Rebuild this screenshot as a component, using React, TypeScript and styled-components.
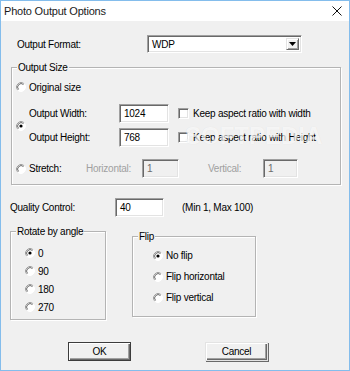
import styled, { createGlobalStyle } from 'styled-components'

const GlobalStyle = createGlobalStyle`
  body {
    margin: 0;
    background: #ffffff;
    font-family: 'Liberation Sans', Arial, sans-serif;
  }
`

const Window = styled.div`
  position: relative;
  width: 350px;
  height: 371px;
  box-sizing: border-box;
  border: 1px solid #84bdec;
  background: #f0f0f0;
  font-size: 10px;
  letter-spacing: -0.25px;
  color: #000;
  display: flex;
  flex-direction: column;
  overflow: hidden;
`
const TitleBar = styled.div`
  height: 20px;
  flex-shrink: 0;
  background: #fff;
  display: flex;
  align-items: center;
  justify-content: space-between;
  padding: 0 7px 0 3px;
  font-size: 11px;
  letter-spacing: -0.2px;
  color: #1a1a1a;
`
const Row = styled.div<{ $top?: number; $left?: number; $h?: number }>`
  display: flex;
  align-items: center;
  margin-top: ${(p) => p.$top ?? 0}px;
  padding-left: ${(p) => p.$left ?? 0}px;
  height: ${(p) => (p.$h ? `${p.$h}px` : 'auto')};
`
const Label = styled.span<{ $w?: number; $ml?: number; $disabled?: boolean }>`
  display: inline-block;
  width: ${(p) => (p.$w ? `${p.$w}px` : 'auto')};
  margin-left: ${(p) => p.$ml ?? 0}px;
  color: ${(p) => (p.$disabled ? '#a0a0a0' : '#000')};
  white-space: nowrap;
  flex-shrink: 0;
`
const Input = styled.div<{ $w: number; $h?: number; $disabled?: boolean }>`
  width: ${(p) => p.$w}px;
  height: ${(p) => p.$h ?? 19}px;
  box-sizing: border-box;
  flex-shrink: 0;
  background: ${(p) => (p.$disabled ? '#f0f0f0' : '#fff')};
  color: ${(p) => (p.$disabled ? '#6d6d6d' : '#000')};
  border-style: solid;
  border-width: 1px;
  border-color: #a0a0a0 #fff #fff #a0a0a0;
  box-shadow: inset 1px 1px 0 #696969, inset -1px -1px 0 #e3e3e3;
  padding: 3px 0 0 4px;
  line-height: 12px;
`
const Select = styled.div`
  position: relative;
  width: 155px;
  height: 18px;
  box-sizing: border-box;
  background: #fff;
  border-style: solid;
  border-width: 1px;
  border-color: #a0a0a0 #fff #fff #a0a0a0;
  box-shadow: inset 1px 1px 0 #696969, inset -1px -1px 0 #e3e3e3;
  display: flex;
  align-items: center;
  justify-content: space-between;
  padding: 0 2px 0 4px;
`
const ArrowButton = styled.div`
  width: 13px;
  height: 12px;
  box-sizing: border-box;
  background: #f0f0f0;
  border-style: solid;
  border-width: 1px;
  border-color: #e3e3e3 #696969 #696969 #e3e3e3;
  box-shadow: inset 1px 1px 0 #fff, inset -1px -1px 0 #a0a0a0;
  display: flex;
  align-items: center;
  justify-content: center;
`
const Group = styled.div<{ $w: number; $ml?: number; $mt?: number; $pad: string }>`
  position: relative;
  width: ${(p) => p.$w}px;
  margin-left: ${(p) => p.$ml ?? 0}px;
  margin-top: ${(p) => p.$mt ?? 0}px;
  box-sizing: border-box;
  border: 1px solid #b4b4b4;
  box-shadow: inset 1px 1px 0 #fff, 1px 1px 0 #fff;
  padding: ${(p) => p.$pad};
  flex-shrink: 0;
`
const Legend = styled.span`
  position: absolute;
  top: -7px;
  left: 5px;
  padding: 0 1px;
  line-height: 13px;
  background: #f0f0f0;
`
const Stack = styled.div<{ $gap: number }>`
  display: flex;
  flex-direction: column;
  gap: ${(p) => p.$gap}px;
`
const Check = styled.span`
  display: inline-block;
  width: 11px;
  height: 11px;
  box-sizing: border-box;
  margin: 0 4px 0 9px;
  background: #fff;
  border-style: solid;
  border-width: 1px;
  border-color: #a0a0a0 #fff #fff #a0a0a0;
  box-shadow: inset 1px 1px 0 #696969, inset -1px -1px 0 #e3e3e3;
  flex-shrink: 0;
`
const RadioRow = styled.div<{ $h: number }>`
  display: flex;
  align-items: center;
  height: ${(p) => p.$h}px;
`
const Button = styled.div<{ $default?: boolean }>`
  width: 63px;
  height: 19px;
  box-sizing: border-box;
  display: flex;
  align-items: center;
  justify-content: center;
  background: #f0f0f0;
  border: 1px solid ${(p) => (p.$default ? '#3c3c3c' : '#e3e3e3')};
  box-shadow: ${(p) =>
    p.$default
      ? 'inset 1px 1px 0 #fff, inset -1px -1px 0 #696969, inset -2px -2px 0 #a0a0a0'
      : 'inset 1px 1px 0 #fff, inset -1px -1px 0 #696969, inset -2px -2px 0 #a0a0a0, 1px 1px 0 #696969'};
`
const Watermark = styled.div`
  position: absolute;
  left: 184px;
  top: 121px;
  font-size: 24px;
  font-weight: bold;
  letter-spacing: 0;
  color: rgba(255, 255, 255, 0.7);
  text-shadow: 0 0 1px rgba(0, 0, 0, 0.08);
  pointer-events: none;
`

function Radio({ checked }: { checked?: boolean }) {
  return (
    <svg width="10" height="10" viewBox="0 0 10 10" style={{ marginRight: 3, flexShrink: 0 }}>
      <circle cx="5" cy="5" r="4.5" fill="#fff" />
      <path d="M8.18 1.82 A4.5 4.5 0 0 0 1.82 8.18" stroke="#a0a0a0" fill="none" />
      <path d="M7.47 2.53 A3.5 3.5 0 0 0 2.53 7.47" stroke="#696969" fill="none" />
      <path d="M1.82 8.18 A4.5 4.5 0 0 0 8.18 1.82" stroke="#fff" fill="none" />
      {checked && <circle cx="5" cy="5" r="1.6" fill="#000" />}
    </svg>
  )
}

export default function App() {
  return (
    <>
      <GlobalStyle />
      <Window>
        <TitleBar>
          <span>Photo Output Options</span>
          <svg width="10" height="10" viewBox="0 0 10 10">
            <path d="M0.5 0.5 L9.5 9.5 M9.5 0.5 L0.5 9.5" stroke="#111" strokeWidth="1" />
          </svg>
        </TitleBar>

        <Row $top={14} $left={16} $h={18}>
          <Label $w={130}>Output Format:</Label>
          <Select>
            <span>WDP</span>
            <ArrowButton>
              <svg width="7" height="4" viewBox="0 0 7 4">
                <path d="M0 0 H7 L3.5 4 Z" fill="#000" />
              </svg>
            </ArrowButton>
          </Select>
        </Row>

        <Group $w={330} $ml={10} $mt={14} $pad="12px 0 6px 4px">
          <Legend>Output Size</Legend>
          <Row $h={14}>
            <Radio />
            <span>Original size</span>
          </Row>
          <Row $top={10}>
            <Radio checked />
            <Stack $gap={5}>
              <Row $h={19}>
                <Label $w={90}>Output Width:</Label>
                <Input $w={50}>1024</Input>
                <Check />
                <span>Keep aspect ratio with width</span>
              </Row>
              <Row $h={19}>
                <Label $w={90}>Output Height:</Label>
                <Input $w={50}>768</Input>
                <Check />
                <span>Keep aspect ratio with Height</span>
              </Row>
            </Stack>
          </Row>
          <Row $top={12} $h={19}>
            <Radio />
            <Label $w={57}>Stretch:</Label>
            <Label $w={56} $disabled>
              Horizontal:
            </Label>
            <Input $w={37} $disabled>
              1
            </Input>
            <Label $w={55} $ml={29} $disabled>
              Vertical:
            </Label>
            <Input $w={35} $disabled>
              1
            </Input>
          </Row>
        </Group>

        <Row $top={13} $left={9} $h={19}>
          <Label $w={105}>Quality Control:</Label>
          <Input $w={49} $h={19}>
            40
          </Input>
          <Label $ml={18}>(Min 1, Max 100)</Label>
        </Row>

        <Row $top={14} $left={9} style={{ alignItems: 'flex-start' }}>
          <Group $w={96} $pad="12px 0 3px 14px">
            <Legend>Rotate by angle</Legend>
            <RadioRow $h={18}>
              <Radio checked />
              <span>0</span>
            </RadioRow>
            <RadioRow $h={18}>
              <Radio />
              <span>90</span>
            </RadioRow>
            <RadioRow $h={18}>
              <Radio />
              <span>180</span>
            </RadioRow>
            <RadioRow $h={18}>
              <Radio />
              <span>270</span>
            </RadioRow>
          </Group>
          <Group $w={124} $ml={26} $mt={5} $pad="8px 0 8px 20px">
            <Legend>Flip</Legend>
            <RadioRow $h={21}>
              <Radio checked />
              <span>No flip</span>
            </RadioRow>
            <RadioRow $h={21}>
              <Radio />
              <span>Flip horizontal</span>
            </RadioRow>
            <RadioRow $h={21}>
              <Radio />
              <span>Flip vertical</span>
            </RadioRow>
          </Group>
        </Row>

        <Row $top={22} $left={67} style={{ gap: 74 }}>
          <Button $default>OK</Button>
          <Button>Cancel</Button>
        </Row>

        <Watermark>SOFTPEDIA</Watermark>
      </Window>
    </>
  )
}
